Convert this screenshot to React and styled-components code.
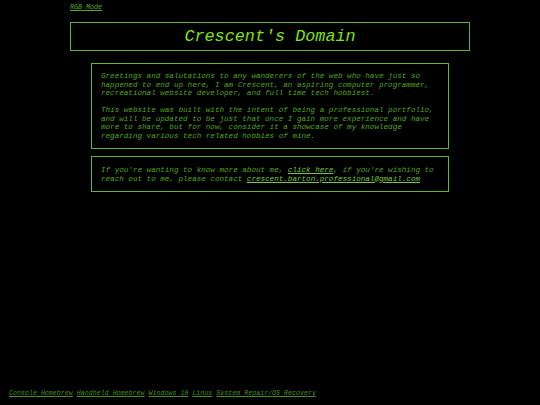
import React from 'react';
import styled, { createGlobalStyle } from 'styled-components';

const GlobalStyle = createGlobalStyle`
    html, body {
        margin: 0;
        padding: 0;
        background-color: #000;
        height: 100%;
    }

    #root {
        min-height: 100%;
        display: flex;
    }
`;

const Page = styled.div`
    flex: 1;
    display: flex;
    flex-direction: column;
    min-height: 405px;
    font-family: "Liberation Mono", "Courier New", monospace;
    font-style: italic;
    color: #4fa71c;
`;

const TopBar = styled.div`
    padding: 3px 0 0 70px;
    height: 19px;
    box-sizing: border-box;
    font-size: 6.7px;
    line-height: 8px;
`;

const SmallLink = styled.a`
    color: #55a81e;
    text-decoration: underline;
    cursor: pointer;
`;

const Main = styled.main`
    flex: 1;
    display: flex;
    flex-direction: column;
    align-items: center;
`;

const Header = styled.header`
    width: 400px;
    height: 29px;
    box-sizing: border-box;
    border: 1px solid #66b232;
    display: flex;
    align-items: center;
    justify-content: center;
    margin-top: 3px;

    h1 {
        margin: 0;
        font-size: 16.8px;
        font-weight: normal;
        color: #7ce414;
    }
`;

const Card = styled.section`
    width: 358px;
    box-sizing: border-box;
    border: 1px solid #66b232;
    padding: ${p => p.$pad || '8px 10px 8px 9px'};
    margin-top: ${p => p.$top || '7px'};
    font-size: 7.6px;
    line-height: 8.5px;

    p {
        margin: 0;
    }

    p + p {
        margin-top: 8.5px;
    }
`;

const InlineLink = styled.a`
    display: inline-block;
    line-height: 8.5px;
    height: 8.5px;
    color: #78c83c;
    text-decoration: underline;
    cursor: pointer;
`;

const Footer = styled.footer`
    display: flex;
    gap: 4px;
    padding: 0 0 8px 9px;
    font-size: 6.65px;
    line-height: 8px;
`;

const FooterLink = styled.a`
    color: #43901c;
    text-decoration: underline;
    cursor: pointer;
`;

const footerLinks = [
    'Console Homebrew',
    'Handheld Homebrew',
    'Windows 10',
    'Linux',
    'System Repair/OS Recovery',
];

const App = () => {
    return (
        <>
            <GlobalStyle />
            <Page>
                <TopBar>
                    <SmallLink>RGB Mode</SmallLink>
                </TopBar>

                <Main>
                    <Header>
                        <h1>Crescent's Domain</h1>
                    </Header>

                    <Card $top="12px">
                        <p>
                            Greetings and salutations to any wanderers of the web who have just so
                            happened to end up here, I am Crescent, an aspiring computer programmer,
                            recreational website developer, and full time tech hobbiest.
                        </p>
                        <p>
                            This website was built with the intent of being a professional portfolio,
                            and will be updated to be just that once I gain more experience and have
                            more to share, but for now, consider it a showcase of my knowledge
                            regarding various tech related hobbies of mine.
                        </p>
                    </Card>

                    <Card $pad="9px 10px 8px 9px">
                        <p>
                            If you're wanting to know more about me, <InlineLink>click here</InlineLink>, if you're wishing to
                            reach out to me, please contact <InlineLink>crescent.barton.professional@gmail.com</InlineLink>
                        </p>
                    </Card>
                </Main>

                <Footer>
                    {footerLinks.map(name => (
                        <FooterLink key={name}>{name}</FooterLink>
                    ))}
                </Footer>
            </Page>
        </>
    );
};

export default App;
